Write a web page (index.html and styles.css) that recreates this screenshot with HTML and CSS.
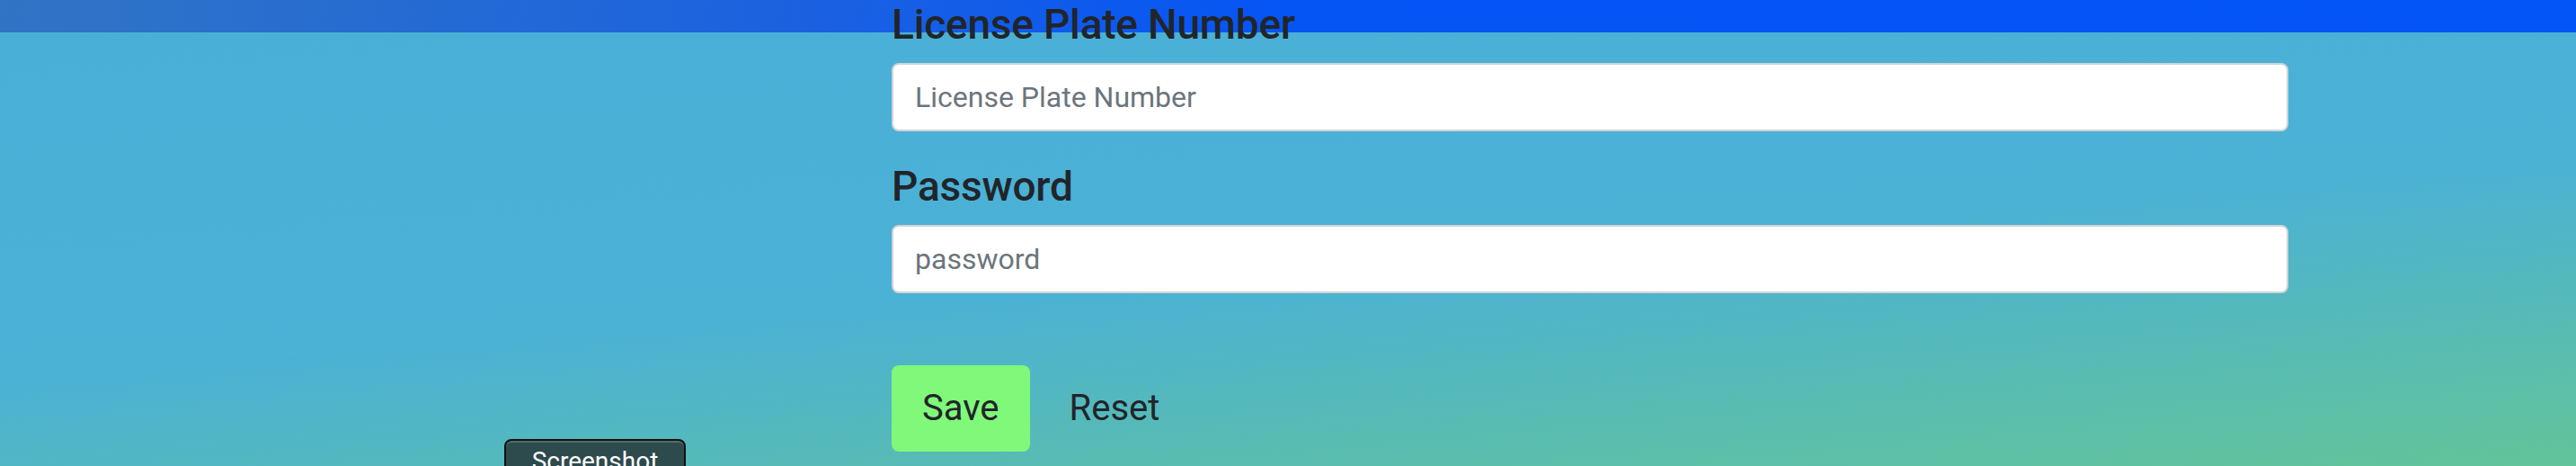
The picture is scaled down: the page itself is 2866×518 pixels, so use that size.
FILE: index.html
```html
<!DOCTYPE html>
<html lang="en">
<head>
<meta charset="utf-8">
<title>Settings</title>
<link rel="stylesheet" href="styles.css">
</head>
<body>
<main class="page">
  <div class="spacer"></div>
  <form class="form">
    <div class="form-group">
      <label class="form-label" for="plate">License Plate Number</label>
      <input class="form-control" id="plate" type="text" placeholder="License Plate Number">
    </div>
    <div class="form-group">
      <label class="form-label" for="pwd">Password</label>
      <input class="form-control" id="pwd" type="text" placeholder="password">
    </div>
    <div class="actions">
      <button class="btn btn-save" type="button">Save</button>
      <button class="btn btn-reset" type="button">Reset</button>
    </div>
  </form>
</main>
<div class="shot-btn">Screenshot</div>
</body>
</html>
```

FILE: styles.css
```css
html, body {
  margin: 0;
  padding: 0;
  height: 100%;
  overflow: hidden;
}

body {
  font-family: Roboto, "Liberation Sans", Arial, sans-serif;
  color: #212529;
  background:
    linear-gradient(100deg, #3075c4 0%, #1c62df 30%, #0555f5 50%, #0455f6 100%) top left / 100% 36px no-repeat,
    linear-gradient(175deg, #4aafd7 0%, #4bb1d5 55%, #62c499 100%);
}

.page {
  display: grid;
  grid-template-columns: 992px 1554px 1fr;
}

.form {
  display: flex;
  flex-direction: column;
}

.form-group {
  display: flex;
  flex-direction: column;
  margin-bottom: 34px;
}

.form-label {
  font-size: 46px;
  font-weight: 500;
  line-height: 1.2;
  margin-bottom: 15px;
  color: #212529;
  letter-spacing: -0.2px;
}

.form-control {
  box-sizing: border-box;
  height: 76px;
  padding: 12px 24px;
  font-family: inherit;
  font-size: 32px;
  line-height: 1.5;
  color: #495057;
  background: #fff;
  border: 2px solid #ced4da;
  border-radius: 8px;
  outline: none;
}

.form-control::placeholder {
  color: #6c757d;
  opacity: 1;
}

.actions {
  display: flex;
  gap: 10px;
  margin-top: 46px;
}

.btn {
  font-family: inherit;
  font-size: 40px;
  line-height: 1.5;
  padding: 16px 32px;
  border: 2px solid transparent;
  border-radius: 8px;
  color: #212529;
  background: transparent;
  cursor: pointer;
}

.btn-save {
  background: #80f87a;
  border-color: #80f87a;
}

.shot-btn {
  position: absolute;
  left: 561px;
  top: 488px;
  width: 202px;
  box-sizing: border-box;
  padding: 6px 0 20px;
  text-align: center;
  font-size: 28px;
  line-height: 1.2;
  color: #fff;
  background: #2d4a4d;
  border: 2px solid #111;
  border-radius: 8px;
  box-shadow: inset 0 2px 0 rgba(255, 255, 255, 0.18);
}
```
